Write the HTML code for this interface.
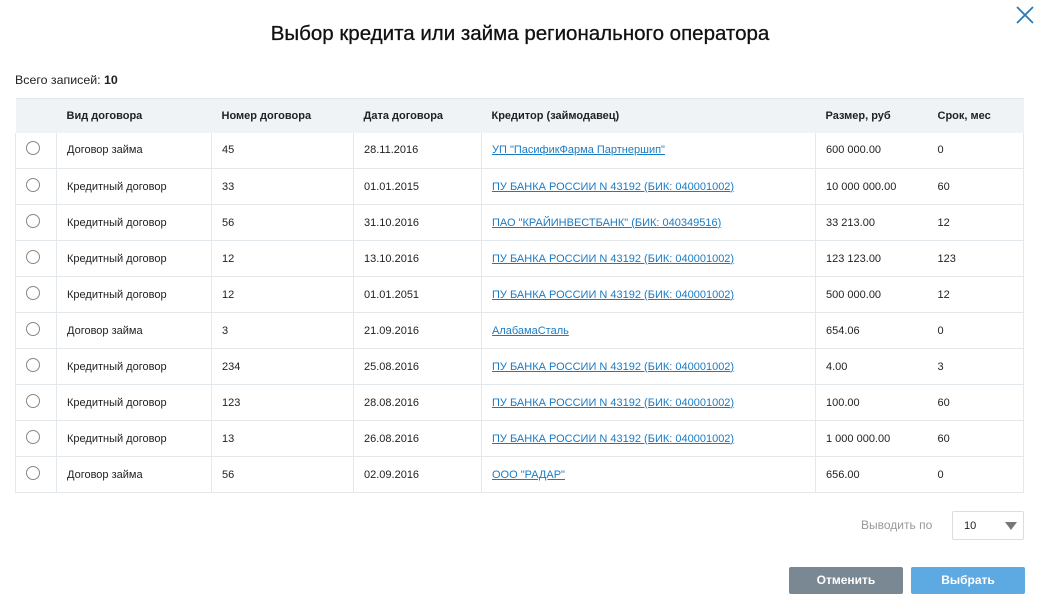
<!DOCTYPE html>
<html><head><meta charset="utf-8"><style>
*{margin:0;padding:0;box-sizing:border-box}
body{width:1038px;height:606px;background:#fff;font-family:"Liberation Sans",Arial,sans-serif;color:#222;position:relative;overflow:hidden}
.title{position:absolute;top:22px;left:0;width:1040px;text-align:center;font-size:20.5px;color:#111;-webkit-text-stroke:0.3px #111}
.close{position:absolute;left:1014px;top:4px}
.total{position:absolute;left:15px;top:73px;font-size:12.4px;color:#222}
table{position:absolute;left:15px;top:98px;width:1009px;border-collapse:collapse;font-size:11px}
th{background:#eff3f6;height:34px;text-align:left;font-weight:bold;padding-left:10px;color:#222;border-top:1px solid #e3e8ec}
td{height:36px;padding-left:10px;border:1px solid #e3e8ec;border-top:none}
td.nb{border-right:none}td.nl{border-left:none}
a{color:#1a7bc4;text-decoration:underline}
.r{width:14px;height:14px;border:1px solid #888;border-radius:50%;display:inline-block;vertical-align:middle;margin-top:-4px}
.lbl{position:absolute;left:861px;top:518px;font-size:12px;color:#999}
.sel{position:absolute;left:952px;top:511px;width:72px;height:29px;border:1px solid #ddd;border-radius:2px;font-size:11px;padding:8px 0 0 11px}
.sel:after{content:"";position:absolute;right:6px;top:10px;border-left:6px solid transparent;border-right:6px solid transparent;border-top:8px solid #777}
.btn{position:absolute;top:567px;height:27px;width:114px;border-radius:2px;color:#fff;font-size:12px;font-weight:bold;text-align:center;line-height:27px}
</style></head><body>
<div class="title">Выбор кредита или займа регионального оператора</div>
<svg class="close" width="22" height="22" viewBox="0 0 22 22"><path d="M3 3L19 19M19 3L3 19" stroke="#2a7ab8" stroke-width="1.8" fill="none"/></svg>
<div class="total">Всего записей: <b>10</b></div>
<table>
<tr><th style="width:41px"></th><th style="width:155px">Вид договора</th><th style="width:142px">Номер договора</th><th style="width:128px">Дата договора</th><th style="width:334px">Кредитор (займодавец)</th><th style="width:112px">Размер, руб</th><th>Срок, мес</th></tr>
<tr><td><span class="r"></span></td><td>Договор займа</td><td>45</td><td>28.11.2016</td><td><a>УП "ПасификФарма Партнершип"</a></td><td class="nb">600 000.00</td><td class="nl">0</td></tr>
<tr><td><span class="r"></span></td><td>Кредитный договор</td><td>33</td><td>01.01.2015</td><td><a>ПУ БАНКА РОССИИ N 43192 (БИК: 040001002)</a></td><td class="nb">10 000 000.00</td><td class="nl">60</td></tr>
<tr><td><span class="r"></span></td><td>Кредитный договор</td><td>56</td><td>31.10.2016</td><td><a>ПАО "КРАЙИНВЕСТБАНК" (БИК: 040349516)</a></td><td class="nb">33 213.00</td><td class="nl">12</td></tr>
<tr><td><span class="r"></span></td><td>Кредитный договор</td><td>12</td><td>13.10.2016</td><td><a>ПУ БАНКА РОССИИ N 43192 (БИК: 040001002)</a></td><td class="nb">123 123.00</td><td class="nl">123</td></tr>
<tr><td><span class="r"></span></td><td>Кредитный договор</td><td>12</td><td>01.01.2051</td><td><a>ПУ БАНКА РОССИИ N 43192 (БИК: 040001002)</a></td><td class="nb">500 000.00</td><td class="nl">12</td></tr>
<tr><td><span class="r"></span></td><td>Договор займа</td><td>3</td><td>21.09.2016</td><td><a>АлабамаСталь</a></td><td class="nb">654.06</td><td class="nl">0</td></tr>
<tr><td><span class="r"></span></td><td>Кредитный договор</td><td>234</td><td>25.08.2016</td><td><a>ПУ БАНКА РОССИИ N 43192 (БИК: 040001002)</a></td><td class="nb">4.00</td><td class="nl">3</td></tr>
<tr><td><span class="r"></span></td><td>Кредитный договор</td><td>123</td><td>28.08.2016</td><td><a>ПУ БАНКА РОССИИ N 43192 (БИК: 040001002)</a></td><td class="nb">100.00</td><td class="nl">60</td></tr>
<tr><td><span class="r"></span></td><td>Кредитный договор</td><td>13</td><td>26.08.2016</td><td><a>ПУ БАНКА РОССИИ N 43192 (БИК: 040001002)</a></td><td class="nb">1 000 000.00</td><td class="nl">60</td></tr>
<tr><td><span class="r"></span></td><td>Договор займа</td><td>56</td><td>02.09.2016</td><td><a>ООО "РАДАР"</a></td><td class="nb">656.00</td><td class="nl">0</td></tr>
</table>
<div class="lbl">Выводить по</div>
<div class="sel">10</div>
<div class="btn" style="left:789px;background:#7a8893">Отменить</div>
<div class="btn" style="left:911px;background:#5daae3">Выбрать</div>
</body></html>
